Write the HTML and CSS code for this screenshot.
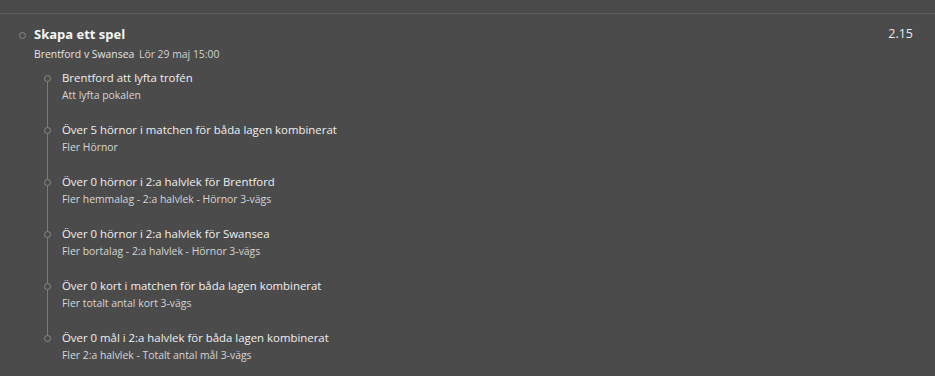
FILE: index.html
```html
<!DOCTYPE html>
<html lang="sv">
<head>
    <meta charset="UTF-8">
    <meta name="viewport" content="width=device-width, initial-scale=1.0">
    <title>Skapa ett spel</title>
    <link rel="stylesheet" href="styles.css">
</head>
<body>

<div class="bet">
    <div class="bet-head">
        <span class="dot"></span>
        <div class="bet-info">
            <div class="bet-title">Skapa ett spel</div>
            <div class="bet-event">Brentford v Swansea <span class="bet-time">Lör 29 maj 15:00</span></div>
        </div>
        <div class="bet-odds">2.15</div>
    </div>

    <ul class="legs">
        <li class="leg">
            <div class="leg-title">Brentford att lyfta trofén</div>
            <div class="leg-market">Att lyfta pokalen</div>
        </li>
        <li class="leg">
            <div class="leg-title">Över 5 hörnor i matchen för båda lagen kombinerat</div>
            <div class="leg-market">Fler Hörnor</div>
        </li>
        <li class="leg">
            <div class="leg-title">Över 0 hörnor i 2:a halvlek för Brentford</div>
            <div class="leg-market">Fler hemmalag - 2:a halvlek - Hörnor 3-vägs</div>
        </li>
        <li class="leg">
            <div class="leg-title">Över 0 hörnor i 2:a halvlek för Swansea</div>
            <div class="leg-market">Fler bortalag - 2:a halvlek - Hörnor 3-vägs</div>
        </li>
        <li class="leg">
            <div class="leg-title">Över 0 kort i matchen för båda lagen kombinerat</div>
            <div class="leg-market">Fler totalt antal kort 3-vägs</div>
        </li>
        <li class="leg">
            <div class="leg-title">Över 0 mål i 2:a halvlek för båda lagen kombinerat</div>
            <div class="leg-market">Fler 2:a halvlek - Totalt antal mål 3-vägs</div>
        </li>
    </ul>
</div>

</body>
</html>
```

FILE: styles.css
```css
body {
    font-family: "Open Sans", "Noto Sans", Arial, sans-serif;
    background-color: #4b4b4b;
    color: #fff;
    margin: 0;
    padding: 0;
}
.bet {
    border-top: 1px solid #5f5f5f;
    margin-top: 13px;
    padding: 11px 22px 0 19px;
}
.bet-head {
    display: flex;
    align-items: flex-start;
}
.dot {
    width: 5px;
    height: 5px;
    border: 1px solid #8a8a8a;
    border-radius: 50%;
    margin: 7px 8px 0 0;
    flex-shrink: 0;
}
.bet-info {
    flex: 1;
}
.bet-title {
    font-size: 13px;
    font-weight: bold;
    line-height: 18px;
    color: #f5f5f5;
}
.bet-event {
    font-size: 10.4px;
    line-height: 14px;
    margin-top: 4px;
    color: #e4e4e4;
}
.bet-time {
    color: #d2d2d2;
    margin-left: 2px;
}
.bet-odds {
    font-size: 12.5px;
    line-height: 18px;
    color: #ececec;
}
.legs {
    list-style: none;
    margin: 9px 0 0 28px;
    padding: 0;
}
.leg {
    position: relative;
    padding-left: 15px;
    height: 52px;
}
.leg::before {
    content: "";
    position: absolute;
    left: -3px;
    top: 5px;
    width: 5px;
    height: 5px;
    border: 1px solid #8a8a8a;
    border-radius: 50%;
    background-color: #4b4b4b;
    z-index: 1;
}
.leg::after {
    content: "";
    position: absolute;
    left: 0;
    top: 12px;
    height: 45px;
    border-left: 1px solid #7a7a7a;
}
.leg:last-child::after {
    display: none;
}
.leg-title {
    font-size: 11.4px;
    line-height: 16px;
    color: #f0f0f0;
}
.leg-market {
    font-size: 10.4px;
    line-height: 15px;
    margin-top: 2px;
    color: #d6d6d6;
}
```
